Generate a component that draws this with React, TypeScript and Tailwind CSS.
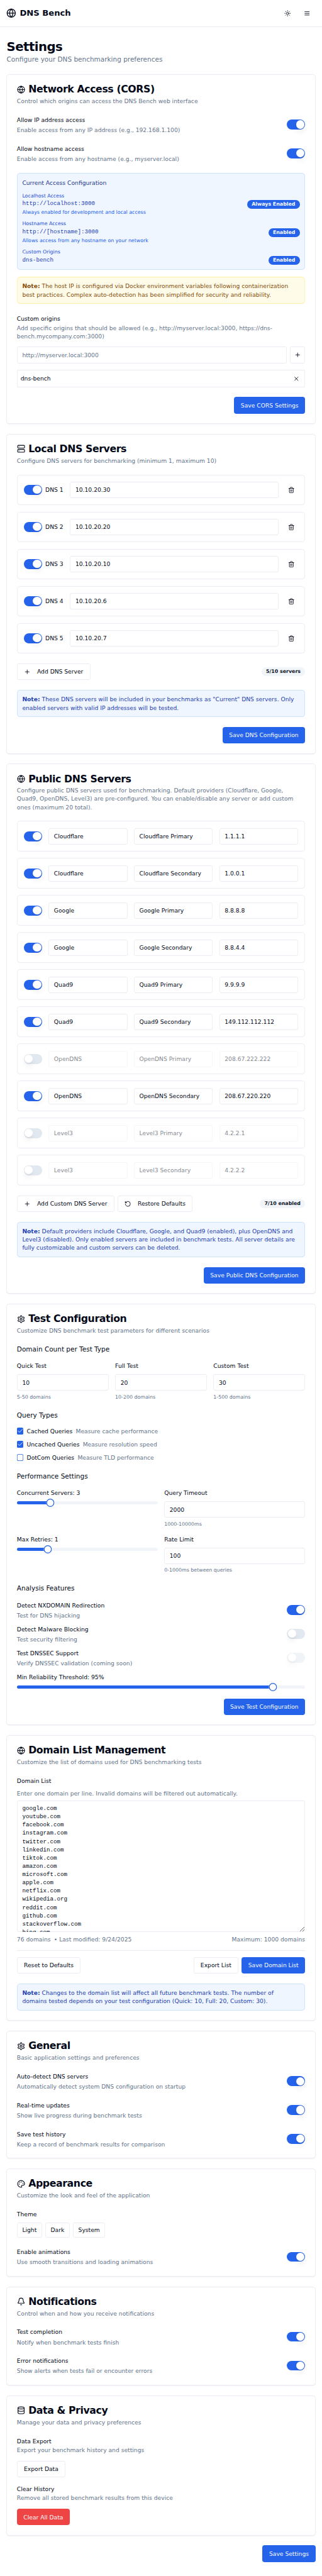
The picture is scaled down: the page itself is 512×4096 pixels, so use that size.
import type { ComponentType, ReactNode } from 'react';
import { Bell, Check, Database, Globe, Palette, Plus, RotateCcw, Server, Sun, Trash2, X } from 'lucide-react';
import clsx from 'clsx';

const localServers = ['10.10.20.30', '10.10.20.20', '10.10.20.10', '10.10.20.6', '10.10.20.7'];

const publicServers = [
  { provider: 'Cloudflare', name: 'Cloudflare Primary', ip: '1.1.1.1', on: true },
  { provider: 'Cloudflare', name: 'Cloudflare Secondary', ip: '1.0.0.1', on: true },
  { provider: 'Google', name: 'Google Primary', ip: '8.8.8.8', on: true },
  { provider: 'Google', name: 'Google Secondary', ip: '8.8.4.4', on: true },
  { provider: 'Quad9', name: 'Quad9 Primary', ip: '9.9.9.9', on: true },
  { provider: 'Quad9', name: 'Quad9 Secondary', ip: '149.112.112.112', on: true },
  { provider: 'OpenDNS', name: 'OpenDNS Primary', ip: '208.67.222.222', on: false },
  { provider: 'OpenDNS', name: 'OpenDNS Secondary', ip: '208.67.220.220', on: true },
  { provider: 'Level3', name: 'Level3 Primary', ip: '4.2.2.1', on: false },
  { provider: 'Level3', name: 'Level3 Secondary', ip: '4.2.2.2', on: false },
];

const domains = [
  'google.com',
  'youtube.com',
  'facebook.com',
  'instagram.com',
  'twitter.com',
  'linkedin.com',
  'tiktok.com',
  'amazon.com',
  'microsoft.com',
  'apple.com',
  'netflix.com',
  'wikipedia.org',
  'reddit.com',
  'github.com',
  'stackoverflow.com',
  'bing.com',
];

const line = 'shadow-[inset_0_0_0_1px_#e2e8f0]';

function MenuIcon({ className }: { className?: string }) {
  return (
    <svg viewBox="0 0 24 24" fill="none" stroke="currentColor" strokeWidth="2" strokeLinecap="round" className={className}>
      <path d="M4 6h16M4 12h16M4 18h16" />
    </svg>
  );
}

function GearIcon({ className }: { className?: string }) {
  return (
    <svg
      viewBox="0 0 24 24"
      fill="none"
      stroke="currentColor"
      strokeWidth="2"
      strokeLinecap="round"
      strokeLinejoin="round"
      className={className}
    >
      <path d="M12.22 2h-.44a2 2 0 0 0-2 2v.18a2 2 0 0 1-1 1.73l-.43.25a2 2 0 0 1-2 0l-.15-.08a2 2 0 0 0-2.73.73l-.22.38a2 2 0 0 0 .73 2.73l.15.1a2 2 0 0 1 1 1.72v.51a2 2 0 0 1-1 1.74l-.15.09a2 2 0 0 0-.73 2.73l.22.38a2 2 0 0 0 2.73.73l.15-.08a2 2 0 0 1 2 0l.43.25a2 2 0 0 1 1 1.73V20a2 2 0 0 0 2 2h.44a2 2 0 0 0 2-2v-.18a2 2 0 0 1 1-1.73l.43-.25a2 2 0 0 1 2 0l.15.08a2 2 0 0 0 2.73-.73l.22-.39a2 2 0 0 0-.73-2.73l-.15-.08a2 2 0 0 1-1-1.74v-.5a2 2 0 0 1 1-1.74l.15-.09a2 2 0 0 0 .73-2.73l-.22-.38a2 2 0 0 0-2.73-.73l-.15.08a2 2 0 0 1-2 0l-.43-.25a2 2 0 0 1-1-1.73V4a2 2 0 0 0-2-2z" />
      <circle cx="12" cy="12" r="3" />
    </svg>
  );
}

function Card({
  icon: Icon,
  title,
  description,
  children,
}: {
  icon: ComponentType<{ className?: string }>;
  title: string;
  description: string;
  children: ReactNode;
}) {
  return (
    <section className="rounded-lg bg-white p-px shadow-[inset_0_0_0_1px_#e2e8f0,0_1px_2px_0_rgb(0_0_0/0.05)]">
      <div className="flex flex-col gap-1.5 p-6">
        <h3 className="flex items-center gap-2 text-2xl leading-none font-semibold tracking-tight">
          <Icon className="size-5" />
          {title}
        </h3>
        <p className="text-sm text-[#64748b]">{description}</p>
      </div>
      <div className="flex flex-col gap-6 p-6 pt-0">{children}</div>
    </section>
  );
}

function Switch({ on, disabled }: { on?: boolean; disabled?: boolean }) {
  return (
    <button
      role="switch"
      aria-checked={!!on}
      className={clsx(
        'flex h-6 w-11 shrink-0 items-center rounded-full p-0.5',
        on ? 'justify-end bg-[#2563eb]' : 'justify-start bg-[#e2e8f0]',
        disabled && 'opacity-50',
      )}
    >
      <span className="block size-5 rounded-full bg-white shadow-lg" />
    </button>
  );
}

function Label({ children }: { children: ReactNode }) {
  return (
    <div>
      <label className="text-sm leading-none font-medium">{children}</label>
    </div>
  );
}

function ToggleRow({
  title,
  text,
  on,
  disabled,
}: {
  title: string;
  text: string;
  on?: boolean;
  disabled?: boolean;
}) {
  return (
    <div className="flex items-center justify-between">
      <div className="flex flex-col gap-0.5">
        <Label>{title}</Label>
        <p className="text-sm text-[#64748b]">{text}</p>
      </div>
      <Switch on={on} disabled={disabled} />
    </div>
  );
}

function Field({
  children,
  placeholder,
  disabled,
}: {
  children: ReactNode;
  placeholder?: boolean;
  disabled?: boolean;
}) {
  return (
    <div
      className={clsx(
        'flex h-10 min-w-0 flex-1 items-center rounded-md bg-white px-[13px] text-sm whitespace-nowrap',
        line,
        placeholder && 'text-[#64748b]',
        disabled && 'opacity-50',
      )}
    >
      {children}
    </div>
  );
}

function Button({
  children,
  variant = 'outline',
  small,
}: {
  children: ReactNode;
  variant?: 'outline' | 'primary' | 'destructive';
  small?: boolean;
}) {
  return (
    <button
      className={clsx(
        'flex shrink-0 items-center justify-center gap-4 rounded-md text-sm font-medium whitespace-nowrap',
        small ? 'h-9 px-[13px]' : variant === 'outline' ? 'h-10 px-[17px]' : 'h-10 px-4',
        variant === 'outline' && 'bg-white',
        variant === 'outline' && line,
        variant === 'primary' && 'bg-[#2563eb] text-[#f8fafc]',
        variant === 'destructive' && 'bg-[#ef4444] text-[#f8fafc]',
      )}
    >
      {children}
    </button>
  );
}

function Badge({ children, primary }: { children: ReactNode; primary?: boolean }) {
  return (
    <span
      className={clsx(
        'rounded-full px-[11px] py-[3px] text-xs font-semibold whitespace-nowrap',
        primary ? 'bg-[#2563eb] text-[#f8fafc]' : 'bg-[#f1f5f9] text-[#0f172a]',
      )}
    >
      {children}
    </span>
  );
}

function Note({ children, warn }: { children: ReactNode; warn?: boolean }) {
  return (
    <div
      className={clsx(
        'rounded-lg p-[13px] text-sm',
        warn
          ? 'bg-[#fefce8] text-[#854d0e] shadow-[inset_0_0_0_1px_#fef08a]'
          : 'bg-[#eff6ff] text-[#1e40af] shadow-[inset_0_0_0_1px_#bfdbfe]',
      )}
    >
      <strong>Note:</strong> {children}
    </div>
  );
}

function AccessRow({ label, value, hint, badge }: { label: string; value: string; hint: string; badge: string }) {
  return (
    <div className="flex items-center justify-between">
      <div>
        <p className="text-xs text-[#1d4ed8]">{label}</p>
        <p className="font-['Liberation_Mono',monospace] text-sm text-[#1e40af]">{value}</p>
        <p className="mt-1 text-xs text-[#2563eb]">{hint}</p>
      </div>
      <Badge primary>{badge}</Badge>
    </div>
  );
}

function Slider({ percent }: { percent: number }) {
  // The thumb stays inside the track, so its centre shifts by up to half its width at each end.
  const shift = 10 - (percent / 100) * 20;
  return (
    <div className="relative flex h-2 items-center">
      <div className="h-2 w-full overflow-hidden rounded-full bg-[#f1f5f9]">
        <div className="h-full bg-[#2563eb]" style={{ width: `${percent}%` }} />
      </div>
      <span
        className="absolute size-5 -translate-x-1/2 rounded-full bg-white shadow-[inset_0_0_0_2px_#2563eb]"
        style={{ left: `calc(${percent}% + ${shift}px)` }}
      />
    </div>
  );
}

function NumberField({ label, value, hint }: { label: string; value: string; hint: string }) {
  return (
    <div className="flex flex-col gap-2">
      <Label>{label}</Label>
      <div className="flex">
        <Field>{value}</Field>
      </div>
      <p className="text-xs text-[#64748b]">{hint}</p>
    </div>
  );
}

function SliderField({ label, percent }: { label: string; percent: number }) {
  return (
    <div className="flex flex-col gap-2">
      <Label>{label}</Label>
      <Slider percent={percent} />
    </div>
  );
}

function CheckRow({ label, hint, checked }: { label: string; hint: string; checked?: boolean }) {
  return (
    <div className="flex items-center gap-2 text-sm">
      <span
        className={clsx(
          'flex size-4 items-center justify-center rounded-sm shadow-[inset_0_0_0_1px_#2563eb]',
          checked && 'bg-[#2563eb] text-[#f8fafc]',
        )}
      >
        {checked && <Check className="size-4 shrink-0" />}
      </span>
      <label className="font-medium">{label}</label>
      <span className="text-[#64748b]">{hint}</span>
    </div>
  );
}

function Group({ title, children }: { title: string; children: ReactNode }) {
  return (
    <div className="flex flex-col gap-4">
      <h4 className="font-medium">{title}</h4>
      {children}
    </div>
  );
}

function SaveBar({ children }: { children: ReactNode }) {
  return (
    <div className="flex justify-end">
      <Button variant="primary">{children}</Button>
    </div>
  );
}

export default function App() {
  return (
    <div className="w-full bg-white font-['DejaVu_Sans',sans-serif] text-base text-[#020817] [zoom:0.6559]">
      <header className="-mb-px flex h-[65px] items-center justify-between px-4 shadow-[inset_0_-1px_0_0_#e2e8f0]">
        <div className="flex items-center gap-2">
          <Globe className="size-6" />
          <span className="text-xl font-bold">DNS Bench</span>
        </div>
        <div className="flex gap-2">
          <button className="flex size-10 items-center justify-center">
            <Sun className="size-4" />
          </button>
          <button className="flex size-10 items-center justify-center">
            <MenuIcon className="size-4" />
          </button>
        </div>
      </header>

      <main className="flex flex-col gap-6 px-4 py-8">
        <div>
          <h1 className="text-3xl font-bold tracking-tight">Settings</h1>
          <p className="text-[#64748b]">Configure your DNS benchmarking preferences</p>
        </div>

        <Card
          icon={Globe}
          title="Network Access (CORS)"
          description="Control which origins can access the DNS Bench web interface"
        >
          <ToggleRow title="Allow IP address access" text="Enable access from any IP address (e.g., 192.168.1.100)" on />
          <ToggleRow title="Allow hostname access" text="Enable access from any hostname (e.g., myserver.local)" on />
          <div className="flex flex-col gap-4">
            <div className="flex flex-col gap-3 rounded-lg bg-[#eff6ff] p-[13px] shadow-[inset_0_0_0_1px_#bfdbfe]">
              <div className="text-[#1e3a8a]">
                <Label>Current Access Configuration</Label>
              </div>
              <AccessRow
                label="Localhost Access"
                value="http://localhost:3000"
                hint="Always enabled for development and local access"
                badge="Always Enabled"
              />
              <AccessRow
                label="Hostname Access"
                value="http://[hostname]:3000"
                hint="Allows access from any hostname on your network"
                badge="Enabled"
              />
              <div>
                <p className="text-xs text-[#1d4ed8]">Custom Origins</p>
                <div className="flex items-center justify-between">
                  <p className="font-['Liberation_Mono',monospace] text-sm text-[#1e40af]">dns-bench</p>
                  <Badge primary>Enabled</Badge>
                </div>
              </div>
            </div>
            <Note warn>
              The host IP is configured via Docker environment variables following containerization best practices.
              Complex auto-detection has been simplified for security and reliability.
            </Note>
          </div>
          <div className="flex flex-col gap-4">
            <div>
              <Label>Custom origins</Label>
              <p className="text-sm text-[#64748b]">
                Add specific origins that should be allowed (e.g., http://myserver.local:3000,
                https://dns-bench.mycompany.com:3000)
              </p>
            </div>
            <div className="flex gap-2">
              <Field placeholder>http://myserver.local:3000</Field>
              <button className={clsx('flex h-10 w-[37px] items-center justify-center rounded-md', line)}>
                <Plus className="size-4 shrink-0" />
              </button>
            </div>
            <div className={clsx('flex items-center justify-between rounded p-[9px] text-sm', line)}>
              <span>dns-bench</span>
              <button className="flex size-6 items-center justify-center">
                <X className="size-4" />
              </button>
            </div>
          </div>
          <SaveBar>Save CORS Settings</SaveBar>
        </Card>

        <Card
          icon={Server}
          title="Local DNS Servers"
          description="Configure DNS servers for benchmarking (minimum 1, maximum 10)"
        >
          <div className="flex flex-col gap-4">
            {localServers.map((ip, i) => (
              <div key={ip} className={clsx('flex items-center gap-4 rounded-lg p-[17px]', line)}>
                <div className="flex w-24 items-center gap-2 text-sm font-medium whitespace-nowrap">
                  <Switch on />
                  <span>DNS {i + 1}</span>
                </div>
                <Field>{ip}</Field>
                <button className="flex size-8 items-center justify-center">
                  <Trash2 className="size-4" />
                </button>
              </div>
            ))}
          </div>
          <div className="flex items-center justify-between">
            <Button>
              <Plus className="size-4" />
              Add DNS Server
            </Button>
            <Badge>5/10 servers</Badge>
          </div>
          <Note>
            These DNS servers will be included in your benchmarks as "Current" DNS servers. Only enabled servers with
            valid IP addresses will be tested.
          </Note>
          <SaveBar>Save DNS Configuration</SaveBar>
        </Card>

        <Card
          icon={Globe}
          title="Public DNS Servers"
          description="Configure public DNS servers used for benchmarking. Default providers (Cloudflare, Google, Quad9, OpenDNS, Level3) are pre-configured. You can enable/disable any server or add custom ones (maximum 20 total)."
        >
          <div className="flex flex-col gap-4">
            {publicServers.map((s) => (
              <div key={s.ip} className={clsx('flex items-center gap-4 rounded-lg p-[17px]', line)}>
                <Switch on={s.on} />
                <div className="grid flex-1 grid-cols-3 gap-4">
                  <Field disabled={!s.on}>{s.provider}</Field>
                  <Field disabled={!s.on}>{s.name}</Field>
                  <Field disabled={!s.on}>{s.ip}</Field>
                </div>
              </div>
            ))}
          </div>
          <div className="flex items-center justify-between">
            <div className="flex gap-2">
              <Button>
                <Plus className="size-4" />
                Add Custom DNS Server
              </Button>
              <Button>
                <RotateCcw className="size-4" />
                Restore Defaults
              </Button>
            </div>
            <Badge>7/10 enabled</Badge>
          </div>
          <Note>
            Default providers include Cloudflare, Google, and Quad9 (enabled), plus OpenDNS and Level3 (disabled). Only
            enabled servers are included in benchmark tests. All server details are fully customizable and custom
            servers can be deleted.
          </Note>
          <SaveBar>Save Public DNS Configuration</SaveBar>
        </Card>

        <Card
          icon={GearIcon}
          title="Test Configuration"
          description="Customize DNS benchmark test parameters for different scenarios"
        >
          <Group title="Domain Count per Test Type">
            <div className="grid grid-cols-3 gap-4">
              <NumberField label="Quick Test" value="10" hint="5-50 domains" />
              <NumberField label="Full Test" value="20" hint="10-200 domains" />
              <NumberField label="Custom Test" value="30" hint="1-500 domains" />
            </div>
          </Group>
          <Group title="Query Types">
            <div className="flex flex-col gap-3">
              <CheckRow label="Cached Queries" hint="Measure cache performance" checked />
              <CheckRow label="Uncached Queries" hint="Measure resolution speed" checked />
              <CheckRow label="DotCom Queries" hint="Measure TLD performance" />
            </div>
          </Group>
          <Group title="Performance Settings">
            <div className="grid grid-cols-2 gap-4">
              <SliderField label="Concurrent Servers: 3" percent={22.2} />
              <NumberField label="Query Timeout" value="2000" hint="1000-10000ms" />
              <SliderField label="Max Retries: 1" percent={20} />
              <NumberField label="Rate Limit" value="100" hint="0-1000ms between queries" />
            </div>
          </Group>
          <Group title="Analysis Features">
            <div className="flex flex-col gap-3">
              <ToggleRow title="Detect NXDOMAIN Redirection" text="Test for DNS hijacking" on />
              <ToggleRow title="Detect Malware Blocking" text="Test security filtering" />
              <ToggleRow title="Test DNSSEC Support" text="Verify DNSSEC validation (coming soon)" disabled />
              <SliderField label="Min Reliability Threshold: 95%" percent={90} />
            </div>
          </Group>
          <SaveBar>Save Test Configuration</SaveBar>
        </Card>

        <Card
          icon={Globe}
          title="Domain List Management"
          description="Customize the list of domains used for DNS benchmarking tests"
        >
          <div className="flex flex-col gap-4">
            <div className="flex flex-col gap-2">
              <Label>Domain List</Label>
              <p className="text-sm text-[#64748b]">
                Enter one domain per line. Invalid domains will be filtered out automatically.
              </p>
              <div
                className={clsx(
                  "h-[318px] resize-y overflow-hidden rounded-md px-[13px] py-[9px] font-['Liberation_Mono',monospace] text-sm",
                  line,
                )}
              >
                {domains.map((d) => (
                  <div key={d}>{d}</div>
                ))}
              </div>
              <div className="flex justify-between text-sm text-[#64748b]">
                <div className="flex gap-2">
                  <span>76 domains</span>
                  <span>• Last modified: 9/24/2025</span>
                </div>
                <span>Maximum: 1000 domains</span>
              </div>
            </div>
            <div className="flex justify-between pt-[17px] shadow-[inset_0_1px_0_0_#e2e8f0]">
              <Button>Reset to Defaults</Button>
              <div className="flex gap-2">
                <Button>Export List</Button>
                <Button variant="primary">Save Domain List</Button>
              </div>
            </div>
          </div>
          <Note>
            Changes to the domain list will affect all future benchmark tests. The number of domains tested depends on
            your test configuration (Quick: 10, Full: 20, Custom: 30).
          </Note>
        </Card>

        <Card icon={GearIcon} title="General" description="Basic application settings and preferences">
          <ToggleRow title="Auto-detect DNS servers" text="Automatically detect system DNS configuration on startup" on />
          <ToggleRow title="Real-time updates" text="Show live progress during benchmark tests" on />
          <ToggleRow title="Save test history" text="Keep a record of benchmark results for comparison" on />
        </Card>

        <Card icon={Palette} title="Appearance" description="Customize the look and feel of the application">
          <div className="flex flex-col gap-2">
            <Label>Theme</Label>
            <div className="flex gap-2">
              <Button small>Light</Button>
              <Button small>Dark</Button>
              <Button small>System</Button>
            </div>
          </div>
          <ToggleRow title="Enable animations" text="Use smooth transitions and loading animations" on />
        </Card>

        <Card icon={Bell} title="Notifications" description="Control when and how you receive notifications">
          <ToggleRow title="Test completion" text="Notify when benchmark tests finish" on />
          <ToggleRow title="Error notifications" text="Show alerts when tests fail or encounter errors" on />
        </Card>

        <Card icon={Database} title="Data & Privacy" description="Manage your data and privacy preferences">
          <div className="flex flex-col items-start gap-4">
            <div>
              <Label>Data Export</Label>
              <p className="text-sm text-[#64748b]">Export your benchmark history and settings</p>
            </div>
            <Button>Export Data</Button>
            <div>
              <Label>Clear History</Label>
              <p className="text-sm text-[#64748b]">Remove all stored benchmark results from this device</p>
            </div>
            <Button variant="destructive">Clear All Data</Button>
          </div>
        </Card>

        <SaveBar>Save Settings</SaveBar>
      </main>
    </div>
  );
}
